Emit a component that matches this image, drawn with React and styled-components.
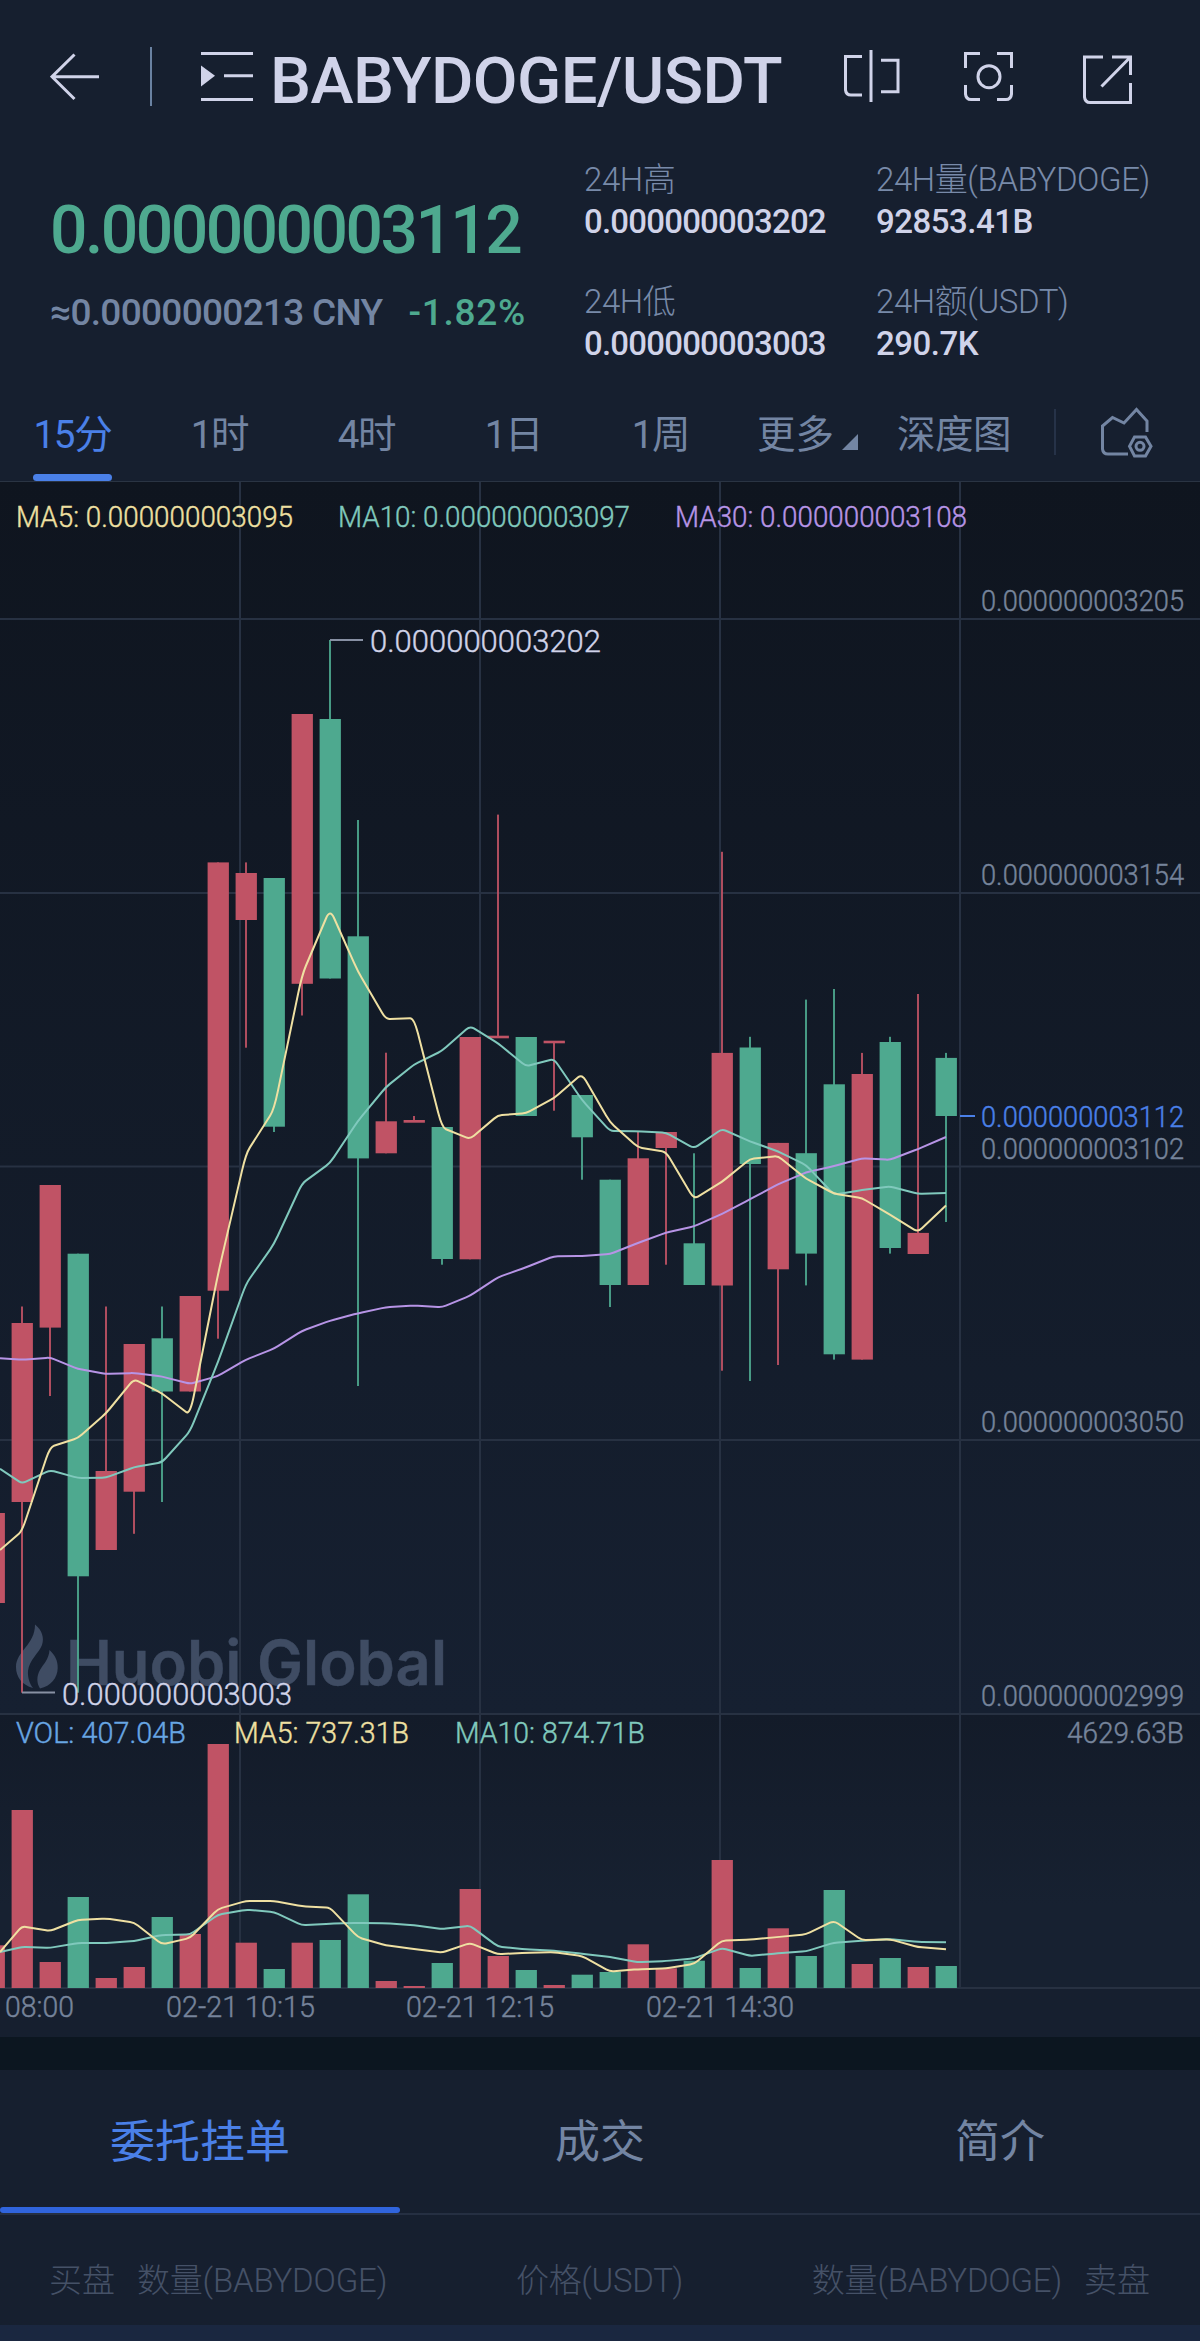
import React from "react";
import styled, { createGlobalStyle } from "styled-components";

const FONT = `Roboto, "Noto Sans CJK SC", "Liberation Sans", sans-serif`;

const C = {
  bg: "#161f2f",
  text: "#d0d3e9",
  muted: "#7385a3",
  dim: "#455167",
  blue: "#4a80e8",
  green: "#4ea98f",
  red: "#c05365",
  grid: "#273142",
  yellow: "#efe0a2",
  teal: "#80c9bd",
  purple: "#b794e6",
};

const GlobalStyle = createGlobalStyle`
  html, body { margin: 0; padding: 0; background: ${C.bg}; }
  * { box-sizing: border-box; }
`;

const Page = styled.main`
  width: 1200px;
  height: 2341px;
  overflow: hidden;
  display: flex;
  flex-direction: column;
  background: ${C.bg};
  color: ${C.text};
  font-family: ${FONT};
`;

/* ---------- top bar ---------- */

const TopBar = styled.header`
  display: flex;
  align-items: center;
  height: 153px;
  padding: 0 66px 0 50px;
`;

const BarDivider = styled.span`
  width: 2px;
  height: 59px;
  margin: 0 49px 0 50px;
  background: #6a82a2;
`;

const Pair = styled.h1`
  margin: 0 0 0 17px;
  padding-top: 9px;
  width: 572px;
  font-size: 65px;
  line-height: 76px;
  font-weight: 500;
  letter-spacing: -0.55px;
  white-space: nowrap;
`;

const Actions = styled.div`
  display: flex;
  flex: 1;
  gap: 61px;
`;

const Icon = styled.svg`
  display: block;
  flex: none;
  fill: none;
  stroke: ${(p) => p.$color || C.text};
  stroke-width: 3;
`;

/* ---------- price summary ---------- */

const Summary = styled.section`
  display: flex;
  height: 247px;
`;

const PriceBlock = styled.div`
  width: 584px;
  padding: 43px 0 0 50px;
`;

const LastPrice = styled.div`
  font-size: 66px;
  line-height: 70px;
  font-weight: 500;
  letter-spacing: -2.55px;
  color: ${C.green};
`;

const Converted = styled.div`
  display: flex;
  gap: 26px;
  margin-top: 25px;
  font-size: 37px;
  line-height: 44px;
  font-weight: 500;
  letter-spacing: -0.7px;
  color: ${C.muted};
  white-space: nowrap;
`;

const Change = styled.span`
  color: ${C.green};
  letter-spacing: 0.7px;
`;

const Stats = styled.dl`
  display: grid;
  grid-template-columns: 292px auto;
  grid-template-rows: 84px 84px;
  row-gap: 38px;
  margin: 0;
  padding-top: 6px;
`;

const Stat = styled.div`
  white-space: nowrap;
`;

const StatLabel = styled.dt`
  font-size: 33px;
  line-height: 42px;
  font-weight: 300;
  letter-spacing: -0.4px;
  color: #788aa9;
`;

const StatValue = styled.dd`
  margin: 0;
  font-size: 33px;
  line-height: 42px;
  font-weight: 500;
  letter-spacing: ${(p) => (p.$long ? -0.8 : -0.5)}px;
`;

/* ---------- interval tabs ---------- */

const Intervals = styled.nav`
  display: flex;
  height: 82px;
  border-bottom: 1px solid #2a3443;
  font-size: 38.5px;
  line-height: 69px;
  font-weight: 400;
  color: ${C.muted};
`;

const Interval = styled.button`
  display: flex;
  flex-direction: column;
  align-items: center;
  width: 147px;
  padding: 0;
  margin-left: -1px;
  margin-right: 1px;
  border: 0;
  background: none;
  font: inherit;
  letter-spacing: -1.2px;
  color: ${(p) => (p.$active ? C.blue : "inherit")};
  &::after {
    content: "";
    width: 79px;
    height: 7px;
    margin-top: 5px;
    border-radius: 4px;
    background: ${(p) => (p.$active ? C.blue : "transparent")};
  }
`;

const More = styled.div`
  display: flex;
  align-items: flex-start;
  width: 140px;
  margin-left: 22px;
`;

const Caret = styled.span`
  width: 0;
  height: 0;
  margin: 34px 0 0 8px;
  border-left: 16px solid transparent;
  border-bottom: 16px solid ${C.muted};
`;

const Depth = styled.div`
  width: 157px;
  letter-spacing: -0.5px;
`;

const ToolDivider = styled.span`
  width: 2px;
  height: 46px;
  margin: 9px 44px 0 0;
  background: #263248;
`;

const ToolIcon = styled.div`
  padding-top: 6px;
`;

/* ---------- chart ---------- */

const ChartSvg = styled.svg`
  display: block;
  flex: none;
  font-family: ${FONT};
`;

const Label = styled.text`
  font-size: ${(p) => p.$size || 28.8}px;
  font-weight: ${(p) => p.$weight || 300};
  fill: ${(p) => p.$color || "#76849b"};
  stroke: ${(p) => p.$color || "#76849b"};
  stroke-width: 0.4px;
  white-space: pre;
`;

const Line = styled.path`
  fill: none;
  stroke: ${(p) => p.$color};
  stroke-width: 2;
`;

/* [colour, bodyTop, bodyBottom, high, low, volumeTop] */
const R = C.red;
const G = C.green;
const CANDLES = [
  [R, 1513, 1603, 1513, 1603, 1945.3],
  [R, 1323, 1502, 1306.5, 1692.7, 1810],
  [R, 1185, 1327.6, 1185, 1396, 1962],
  [G, 1253.7, 1576.3, 1253.7, 1692.7, 1897],
  [R, 1471, 1550, 1306.5, 1550, 1978],
  [R, 1344, 1491.7, 1344, 1533.8, 1967],
  [G, 1338.3, 1391.5, 1306.5, 1502, 1917],
  [R, 1296, 1391.5, 1296, 1391.5, 1934],
  [R, 862.4, 1290.7, 862.4, 1338.7, 1744],
  [R, 873, 920, 862.4, 1047.7, 1942.7],
  [G, 878, 1126.7, 878, 1132, 1969],
  [R, 714, 983.8, 714, 1015.5, 1942.7],
  [G, 719, 978.5, 640, 978.5, 1940],
  [G, 936.3, 1158.4, 820, 1386, 1894.3],
  [R, 1121.3, 1153.3, 1052.7, 1153.3, 1981],
  [R, 1120, 1122.7, 1116, 1122, 1986],
  [G, 1127, 1259, 1127, 1264.7, 1963],
  [R, 1037, 1259.3, 1037, 1259.3, 1889],
  [R, 1035.7, 1038.3, 814.6, 1038, 1956],
  [G, 1037, 1116, 1037, 1116, 1970],
  [R, 1040.7, 1043.3, 1041, 1110.7, 1985],
  [G, 1095, 1137.3, 1095, 1179.7, 1974.7],
  [G, 1179.7, 1285, 1179.7, 1307, 1972],
  [R, 1158.3, 1285, 1132, 1285, 1944.3],
  [R, 1132, 1148, 1132, 1264.7, 1968.3],
  [G, 1243.3, 1285, 1153.3, 1285, 1960.7],
  [R, 1052.9, 1285.5, 851.8, 1370.7, 1860],
  [G, 1047.5, 1164, 1036.8, 1381, 1968],
  [R, 1142.9, 1269.3, 1142.9, 1365, 1928.3],
  [G, 1153.2, 1253.6, 999.6, 1285.4, 1956],
  [G, 1084.3, 1354.3, 989, 1359.6, 1890],
  [R, 1074, 1359.6, 1052.9, 1359.6, 1964],
  [G, 1042, 1248, 1036.8, 1253.6, 1958],
  [R, 1232.9, 1254, 994, 1254, 1967],
  [G, 1057.9, 1116, 1052.9, 1222, 1966],
];

const MA5 = [1550, 1531, 1447, 1438, 1413.3, 1379, 1393.4, 1415, 1274, 1153.5, 1109.7, 975, 909, 971.7, 1019.3, 1018, 1127.7, 1139, 1115.3, 1113.3, 1098, 1074, 1122.3, 1147.3, 1152, 1199, 1181.8, 1159, 1156, 1178.6, 1193.6, 1198.2, 1214.6, 1232, 1205.4];
const MA10 = [1468.8, 1483.5, 1470.2, 1478, 1477.6, 1467.3, 1462.3, 1431.3, 1362, 1283.8, 1244, 1183.5, 1163, 1120.9, 1087, 1064.6, 1050.8, 1026, 1043.3, 1066.2, 1059, 1100, 1131, 1131.3, 1132.7, 1148.3, 1129, 1141.4, 1151.4, 1165, 1194.6, 1190, 1186.4, 1193.8, 1192.9];
const MA30 = [1358.2, 1359.7, 1357.6, 1368.9, 1373.9, 1373, 1376.6, 1383.8, 1376, 1359.7, 1348.6, 1331, 1320.7, 1313.3, 1307.3, 1305.5, 1307.3, 1295.7, 1277.3, 1267.3, 1256.2, 1256, 1254, 1243, 1232.7, 1226.4, 1213.9, 1199.3, 1184.3, 1172.5, 1166, 1158.4, 1159.8, 1149, 1137];
const VMA5 = [1952, 1926.3, 1931, 1920, 1918.5, 1922.5, 1944.3, 1938, 1909, 1901, 1901, 1906.3, 1907.7, 1937.3, 1945.3, 1949, 1952.6, 1943, 1954.3, 1952.7, 1952.3, 1956, 1971.5, 1969.3, 1968.3, 1964, 1940.5, 1939.7, 1937, 1934.3, 1920.8, 1940.2, 1939.3, 1947, 1949.3];
const VMA10 = [1952, 1947, 1947.8, 1943, 1943, 1941, 1935, 1934.5, 1914.7, 1909.7, 1912, 1925.2, 1923.7, 1923, 1923.3, 1925.3, 1929, 1925.7, 1946.5, 1949.3, 1950.7, 1953.7, 1957, 1962.2, 1961, 1958.3, 1948.2, 1955.9, 1953.3, 1951.3, 1942.7, 1940.7, 1939, 1942, 1942.3];

const STEP = 28;
const centre = (i) => 22 + STEP * (i - 1);

/* Polyline whose corners are eased with a short quadratic curve. */
function easedPath(ys) {
  const pts = ys.map((y, i) => [i === 0 ? 0 : centre(i), y]);
  const k = 0.14;
  let d = `M${pts[0][0]} ${pts[0][1]}`;
  for (let i = 1; i < pts.length - 1; i++) {
    const [px, py] = pts[i - 1];
    const [x, y] = pts[i];
    const [nx, ny] = pts[i + 1];
    d += ` L${x + (px - x) * k} ${y + (py - y) * k} Q${x} ${y} ${x + (nx - x) * k} ${y + (ny - y) * k}`;
  }
  const last = pts[pts.length - 1];
  return `${d} L${last[0]} ${last[1]}`;
}

/* Text stretched to an exact pixel span. */
const Span = ({ x, to, y, children, ...rest }) => (
  <Label x={x} y={y} textLength={to - x} lengthAdjust="spacingAndGlyphs" {...rest}>
    {children}
  </Label>
);

const AXIS = [
  ["0.000000003205", 611],
  ["0.000000003154", 884.5],
  ["0.000000003102", 1158.5],
  ["0.000000003050", 1432],
  ["0.000000002999", 1706],
];

const TIMES = [
  ["08:00", 5, 74],
  ["02-21 10:15", 166, 315],
  ["02-21 12:15", 406, 554],
  ["02-21 14:30", 646, 794],
];

function Chart() {
  return (
    <ChartSvg width="1200" height="1555" viewBox="0 482 1200 1555">
      <defs>
        <linearGradient id="pricePane" x1="0" y1="0" x2="0" y2="1">
          <stop offset="0" stopColor="#0f151f" />
          <stop offset="1" stopColor="#162031" />
        </linearGradient>
        <linearGradient id="volumePane" x1="0" y1="0" x2="0" y2="1">
          <stop offset="0" stopColor="#131b29" />
          <stop offset="0.7" stopColor="#172131" />
          <stop offset="1" stopColor="#172131" />
        </linearGradient>
      </defs>
      <rect x="0" y="482" width="1200" height="1232" fill="url(#pricePane)" />
      <rect x="0" y="1714" width="1200" height="274" fill="url(#volumePane)" />
      <rect x="0" y="1988" width="1200" height="49" fill={C.bg} />

      <g fill={C.grid}>
        {[240, 480, 720, 960].map((x) => (
          <rect key={x} x={x - 1} y="482" width="2" height="1506" />
        ))}
        {[618, 892, 1165.5, 1439, 1713, 1987].map((y) => (
          <rect key={y} x="0" y={y} width="1200" height="2" />
        ))}
      </g>

      <g fill="#3f4c63">
        <path d="M35 1624.500C42 1630 44.500 1638 42 1645C39 1653 29 1660 28 1671C27.500 1678 30 1684 33 1688C22 1685 16 1677 16 1667C16 1651 35 1645 35 1624.500Z" />
        <path d="M49.500 1650C55 1655 58 1661 57.700 1668C57.500 1678 51 1686 40 1688.500C36.500 1683 36.500 1676 40 1670C43.500 1664 49 1659 49.500 1650Z" />
        <Span x={66} to={447} y={1685} $size={62} $weight={600} $color="#3f4c63" style={{ fontFamily: "Inter" }}>
          Huobi Global
        </Span>
      </g>

      {CANDLES.map(([color, top, bottom, high, low, vol], i) => (
        <g key={i} fill={color}>
          <rect x={centre(i) - 1} y={high} width="2" height={low - high} opacity="0.9" />
          <rect x={centre(i) - 10.4} y={top} width="21.300" height={bottom - top} />
          <rect x={centre(i) - 10.4} y={vol} width="21.300" height={1988 - vol} />
        </g>
      ))}

      <Line d={easedPath(MA30)} $color={C.purple} />
      <Line d={easedPath(MA10)} $color={C.teal} />
      <Line d={easedPath(MA5)} $color={C.yellow} />
      <Line d={easedPath(VMA10)} $color={C.teal} />
      <Line d={easedPath(VMA5)} $color={C.yellow} />

      <Line d="M330 640H363 M22 1692.500H55" $color="#8790a3" />
      <Span x={370} to={601} y={651.5} $size={32} $color={C.text}>0.000000003202</Span>
      <Span x={62} to={292} y={1704.5} $size={32} $color={C.text}>0.000000003003</Span>

      <Span x={16} to={293} y={527} $color={C.yellow}>MA5: 0.000000003095</Span>
      <Span x={338} to={630} y={527} $color={C.teal}>MA10: 0.000000003097</Span>
      <Span x={675} to={967} y={527} $color={C.purple}>MA30: 0.000000003108</Span>

      {AXIS.map(([label, y]) => (
        <Span key={label} x={981} to={1184} y={y}>{label}</Span>
      ))}
      <Line d="M960 1116H975" $color={C.blue} />
      <Span x={981} to={1184} y={1126.5} $color={C.blue}>0.000000003112</Span>

      <Span x={16} to={186} y={1743} $color="#68a6e3">VOL: 407.04B</Span>
      <Span x={234} to={409} y={1743} $color={C.yellow}>MA5: 737.31B</Span>
      <Span x={455} to={645} y={1743} $color={C.teal}>MA10: 874.71B</Span>
      <Span x={1067} to={1184} y={1743}>4629.63B</Span>

      {TIMES.map(([label, x, to]) => (
        <Span key={label} x={x} to={to} y={2016.5}>{label}</Span>
      ))}
    </ChartSvg>
  );
}

/* ---------- order book ---------- */

const Gap = styled.div`
  flex: none;
  height: 33px;
  background: #0c1620;
`;

const BookTabs = styled.nav`
  display: grid;
  flex: none;
  grid-template-columns: repeat(3, 400px);
  height: 145px;
  border-bottom: 2px solid #252f42;
`;

const BookTab = styled.button`
  display: flex;
  flex-direction: column;
  justify-content: space-between;
  padding: 40px 0 0;
  border: 0;
  background: none;
  font: 400 45px/66px ${FONT};
  text-align: center;
  align-items: stretch;
  color: ${(p) => (p.$active ? C.blue : C.muted)};
  &::after {
    content: "";
    height: 6px;
    border-radius: 3px;
    background: ${(p) => (p.$active ? "#3064dc" : "transparent")};
  }
`;

const BookHead = styled.div`
  display: grid;
  grid-template-columns: 1fr auto 1fr;
  flex: none;
  height: 110px;
  padding: 44px 50px 0 49px;
  font-size: 33px;
  line-height: 44px;
  font-weight: 300;
  color: ${C.dim};
  white-space: nowrap;
`;

const Side = styled.div`
  display: flex;
  gap: 22px;
  justify-content: ${(p) => (p.$right ? "flex-end" : "flex-start")};
`;

const Col = styled.span`
  letter-spacing: ${(p) => p.$ls || 0}px;
`;

const BookRow = styled.div`
  flex: 1;
  background: #1a2740;
`;

const STATS = [
  ["24H高", "0.000000003202"],
  ["24H量(BABYDOGE)", "92853.41B"],
  ["24H低", "0.000000003003"],
  ["24H额(USDT)", "290.7K"],
];

export default function App() {
  return (
    <Page>
      <GlobalStyle />
      <TopBar>
        <Icon width="50" height="60" viewBox="50 47 50 60">
          <path d="M99 76.700H52 M74.500 54.500L52 76.700L74.500 99" />
        </Icon>
        <BarDivider />
        <Icon width="52" height="60" viewBox="201 47 52 60" strokeWidth="3.300">
          <path d="M201 53.500H253 M224 75.700H253 M201 99.500H253" />
          <path d="M201 65.500L215 75.700L201 86.500Z" fill={C.text} stroke="none" />
        </Icon>
        <Pair>BABYDOGE/USDT</Pair>
        <Actions>
          <Icon width="60" height="60" viewBox="842 47 60 60">
            <path d="M862 56.500H845.500V90Q846 95 851 95H862 M871 50V102 M881 60.300H898V91.700H881" />
          </Icon>
          <Icon width="52" height="60" viewBox="963 47 52 60">
            <path d="M980 53.500H965.500V68 M997 53.500H1011.500V68 M965.500 85V94Q966 99.500 971 99.500H980 M1011.500 85V94Q1011 99.500 1006 99.500H997" />
            <circle cx="989" cy="76.700" r="11" />
          </Icon>
          <Icon width="52" height="60" viewBox="1076 47 52 60" overflow="visible">
            <path d="M1103 57H1084.500V97Q1085 102.500 1090 102.500H1130.500V83 M1112 57H1130.500V75 M1101.500 86.500L1130 57.500" />
          </Icon>
        </Actions>
      </TopBar>

      <Summary>
        <PriceBlock>
          <LastPrice>0.000000003112</LastPrice>
          <Converted>
            <span>≈0.0000000213 CNY</span>
            <Change>-1.82%</Change>
          </Converted>
        </PriceBlock>
        <Stats>
          {STATS.map(([label, value]) => (
            <Stat key={label}>
              <StatLabel>{label}</StatLabel>
              <StatValue $long={value.length > 10}>{value}</StatValue>
            </Stat>
          ))}
        </Stats>
      </Summary>

      <Intervals>
        {["15分", "1时", "4时", "1日", "1周"].map((t, i) => (
          <Interval key={t} $active={i === 0}>{t}</Interval>
        ))}
        <More>
          更多
          <Caret />
        </More>
        <Depth>深度图</Depth>
        <ToolDivider />
        <ToolIcon>
          <Icon width="54" height="54" viewBox="1100 406 54 54" $color={C.muted}>
            <path d="M1147 432V421L1136.500 409.500L1124 423L1112.500 417.500L1102.500 426V449Q1103 454 1108 454H1128" />
            <path d="M1134.500 437H1145.500L1151 446.300L1145.500 456H1134.500L1129.500 446.300Z" />
            <circle cx="1140" cy="446.300" r="4" />
          </Icon>
        </ToolIcon>
      </Intervals>

      <Chart />
      <Gap />

      <BookTabs>
        <BookTab $active>委托挂单</BookTab>
        <BookTab>成交</BookTab>
        <BookTab>简介</BookTab>
      </BookTabs>
      <BookHead>
        <Side>
          <Col>买盘</Col>
          <Col $ls={-0.2}>数量(BABYDOGE)</Col>
        </Side>
        <Col $ls={-0.3}>价格(USDT)</Col>
        <Side $right>
          <Col $ls={-0.2}>数量(BABYDOGE)</Col>
          <Col>卖盘</Col>
        </Side>
      </BookHead>
      <BookRow />
    </Page>
  );
}
